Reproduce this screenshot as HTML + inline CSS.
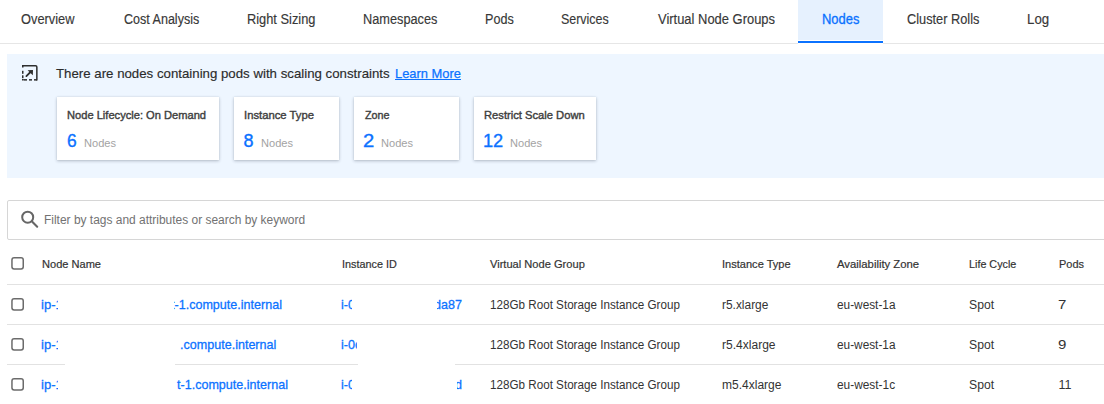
<!DOCTYPE html>
<html><head><meta charset="utf-8"><title>Nodes</title>
<style>
html,body{margin:0;padding:0}
body{width:1104px;height:404px;overflow:hidden;background:#fff;position:relative;font-family:"Liberation Sans",sans-serif}
.abs{position:absolute}
.t{position:absolute;white-space:nowrap;transform-origin:0 0}
.clip{position:absolute;overflow:hidden}
.tabline{position:absolute;left:0;top:43px;width:1104px;height:1px;background:#e6e6e6}
.tabact{position:absolute;left:798px;top:0;width:85px;height:40px;background:#e6f1fe}
.tabbar{position:absolute;left:798px;top:41px;width:85px;height:2px;background:#0b72ff}.tabcov{position:absolute;left:798px;top:43px;width:85px;height:1px;background:#fff}
.panel{position:absolute;left:7px;top:54px;width:1110px;height:124px;background:#eef6ff}
.card{position:absolute;top:97px;height:63px;background:#fff;box-shadow:0 1px 3px rgba(40,50,70,.3),0 0 1px rgba(40,50,70,.12)}
.search{position:absolute;left:7px;top:200px;width:1120px;height:38px;border:1px solid #d6d6d6;border-radius:2px;background:#fff}
.hl{position:absolute;left:7px;width:1100px;height:1px;background:#e2e2e2}
.cb{position:absolute;left:11px;width:10px;height:10px;border:1.5px solid #6a6a6a;border-radius:2px;background:#fff}
.gap{position:absolute;height:3px;background:#fff}
</style></head><body>
<div class="tabact"></div><div class="tabline"></div><div class="tabbar"></div><div class="tabcov"></div>
<div class="panel"></div>
<svg class="abs" style="left:18px;top:61px" width="24" height="24" viewBox="18 61 24 24">
<path d="M22.75 67.6 V65.75 H35.6 Q36.85 65.75 36.85 67 V80.6" fill="none" stroke="#2e2e2e" stroke-width="1.5"/>
<rect x="22" y="70.8" width="1.5" height="3" fill="#2e2e2e"/>
<rect x="22" y="75.3" width="1.5" height="2.9" fill="#2e2e2e"/>
<path d="M22.75 79 V79.85 H23.8" fill="none" stroke="#2e2e2e" stroke-width="1.5"/>
<rect x="24" y="79.1" width="3" height="1.5" fill="#2e2e2e"/>
<rect x="29" y="79.1" width="3" height="1.5" fill="#2e2e2e"/>
<rect x="34" y="79.1" width="3" height="1.5" fill="#2e2e2e"/>
<line x1="26.4" y1="76.1" x2="31" y2="71.5" stroke="#2e2e2e" stroke-width="1.8" stroke-linecap="round"/>
<path d="M27.6 70.2 L33 70 L32.8 75.3 Z" fill="#2e2e2e"/>
</svg>
<div class="card" style="left:57px;width:162px"></div>
<div class="card" style="left:234px;width:105px"></div>
<div class="card" style="left:354px;width:105px"></div>
<div class="card" style="left:474px;width:122px"></div>
<div class="search"></div>
<svg class="abs" style="left:15px;top:205px" width="30" height="30" viewBox="15 205 30 30">
<circle cx="27.7" cy="217.2" r="5.5" fill="none" stroke="#666" stroke-width="2"/>
<line x1="32" y1="221.5" x2="37.2" y2="226.7" stroke="#666" stroke-width="2.1" stroke-linecap="round"/>
</svg>
<div class="hl" style="top:284px"></div>
<div class="hl" style="top:324px"></div>
<div class="hl" style="top:364px"></div>
<div class="gap" style="left:64.7px;width:110.2px;top:363px"></div>
<div class="gap" style="left:358.1px;width:96.5px;top:363px"></div>
<svg class="abs" style="left:8px;top:254.10000000000002px" width="20" height="20" viewBox="8 254.10000000000002 20 20"><rect x="11.95" y="257.85" width="11.3" height="11.3" rx="2.2" fill="#fff" stroke="#6b6b6b" stroke-width="1.5"/></svg><svg class="abs" style="left:8px;top:295px" width="20" height="20" viewBox="8 295 20 20"><rect x="11.95" y="298.75" width="11.3" height="11.3" rx="2.2" fill="#fff" stroke="#6b6b6b" stroke-width="1.5"/></svg><svg class="abs" style="left:8px;top:335px" width="20" height="20" viewBox="8 335 20 20"><rect x="11.95" y="338.75" width="11.3" height="11.3" rx="2.2" fill="#fff" stroke="#6b6b6b" stroke-width="1.5"/></svg><svg class="abs" style="left:8px;top:375px" width="20" height="20" viewBox="8 375 20 20"><rect x="11.95" y="378.75" width="11.3" height="11.3" rx="2.2" fill="#fff" stroke="#6b6b6b" stroke-width="1.5"/></svg>
<span class="t" style="left:21.07px;top:13.2px;font-size:13.8px;line-height:13.8px;color:#383838;transform:scaleX(0.9298);-webkit-text-stroke:0.15px #383838;">Overview</span>
<span class="t" style="left:123.59px;top:13.2px;font-size:13.8px;line-height:13.8px;color:#383838;transform:scaleX(0.9085);-webkit-text-stroke:0.15px #383838;">Cost Analysis</span>
<span class="t" style="left:247.37px;top:13.2px;font-size:13.8px;line-height:13.8px;color:#383838;transform:scaleX(0.9292);-webkit-text-stroke:0.15px #383838;">Right Sizing</span>
<span class="t" style="left:362.78px;top:13.2px;font-size:13.8px;line-height:13.8px;color:#383838;transform:scaleX(0.9241);-webkit-text-stroke:0.15px #383838;">Namespaces</span>
<span class="t" style="left:484.79px;top:13.2px;font-size:13.8px;line-height:13.8px;color:#383838;transform:scaleX(0.9133);-webkit-text-stroke:0.15px #383838;">Pods</span>
<span class="t" style="left:561.4px;top:13.2px;font-size:13.8px;line-height:13.8px;color:#383838;transform:scaleX(0.9019);-webkit-text-stroke:0.15px #383838;">Services</span>
<span class="t" style="left:657.6px;top:13.2px;font-size:13.8px;line-height:13.8px;color:#383838;transform:scaleX(0.9379);-webkit-text-stroke:0.15px #383838;">Virtual Node Groups</span>
<span class="t" style="left:821.66px;top:13.2px;font-size:13.8px;line-height:13.8px;color:#0b72ff;transform:scaleX(0.9385);-webkit-text-stroke:0.3px #0b72ff;">Nodes</span>
<span class="t" style="left:906.57px;top:13.2px;font-size:13.8px;line-height:13.8px;color:#383838;transform:scaleX(0.9260);-webkit-text-stroke:0.15px #383838;">Cluster Rolls</span>
<span class="t" style="left:1026.94px;top:13.2px;font-size:13.8px;line-height:13.8px;color:#383838;transform:scaleX(0.9619);-webkit-text-stroke:0.15px #383838;">Log</span>
<span class="t" style="left:55.7px;top:67px;font-size:13.5px;line-height:13.5px;color:#2b2b2b;transform:scaleX(0.9815);-webkit-text-stroke:0.15px #2b2b2b;">There are nodes containing pods with scaling constraints</span>
<span class="t" style="left:395.14px;top:67px;font-size:13.5px;line-height:13.5px;color:#0b72ff;transform:scaleX(0.9559);-webkit-text-stroke:0.25px #0b72ff;text-decoration:underline;">Learn More</span>
<span class="t" style="left:67.23px;top:109.9px;font-size:11.5px;line-height:11.5px;color:#3e3e3e;transform:scaleX(0.9664);-webkit-text-stroke:0.4px #3e3e3e;">Node Lifecycle: On Demand</span>
<span class="t" style="left:66.93px;top:131.8px;font-size:18px;line-height:18px;color:#0b72ff;transform:scaleX(0.9667);-webkit-text-stroke:0.35px #0b72ff;">6</span>
<span class="t" style="left:84.24px;top:137.8px;font-size:11.5px;line-height:11.5px;color:#a3a3a3;transform:scaleX(0.9625);">Nodes</span>
<span class="t" style="left:243.82px;top:109.9px;font-size:11.5px;line-height:11.5px;color:#3e3e3e;transform:scaleX(0.9800);-webkit-text-stroke:0.4px #3e3e3e;">Instance Type</span>
<span class="t" style="left:243.5px;top:131.8px;font-size:18px;line-height:18px;color:#0b72ff;transform:scaleX(1.0000);-webkit-text-stroke:0.35px #0b72ff;">8</span>
<span class="t" style="left:261.04px;top:137.8px;font-size:11.5px;line-height:11.5px;color:#a3a3a3;transform:scaleX(0.9625);">Nodes</span>
<span class="t" style="left:364.6px;top:109.9px;font-size:11.5px;line-height:11.5px;color:#3e3e3e;transform:scaleX(0.9385);-webkit-text-stroke:0.4px #3e3e3e;">Zone</span>
<span class="t" style="left:363.48px;top:131.8px;font-size:18px;line-height:18px;color:#0b72ff;transform:scaleX(1.1250);-webkit-text-stroke:0.35px #0b72ff;">2</span>
<span class="t" style="left:381.04px;top:137.8px;font-size:11.5px;line-height:11.5px;color:#a3a3a3;transform:scaleX(0.9625);">Nodes</span>
<span class="t" style="left:483.83px;top:109.9px;font-size:11.5px;line-height:11.5px;color:#3e3e3e;transform:scaleX(0.9725);-webkit-text-stroke:0.4px #3e3e3e;">Restrict Scale Down</span>
<span class="t" style="left:483.49px;top:131.8px;font-size:18px;line-height:18px;color:#0b72ff;transform:scaleX(1.0111);-webkit-text-stroke:0.35px #0b72ff;">12</span>
<span class="t" style="left:510.24px;top:137.8px;font-size:11.5px;line-height:11.5px;color:#a3a3a3;transform:scaleX(0.9625);">Nodes</span>
<span class="t" style="left:44.3px;top:213.7px;font-size:12px;line-height:12px;color:#727272;transform:scaleX(0.9962);">Filter by tags and attributes or search by keyword</span>
<span class="t" style="left:41.54px;top:258.8px;font-size:11.5px;line-height:11.5px;color:#333;transform:scaleX(0.9617);-webkit-text-stroke:0.2px #333;">Node Name</span>
<span class="t" style="left:341.76px;top:258.8px;font-size:11.5px;line-height:11.5px;color:#333;transform:scaleX(0.9421);-webkit-text-stroke:0.2px #333;">Instance ID</span>
<span class="t" style="left:490.3px;top:258.8px;font-size:11.5px;line-height:11.5px;color:#333;transform:scaleX(0.9653);-webkit-text-stroke:0.2px #333;">Virtual Node Group</span>
<span class="t" style="left:722.04px;top:258.8px;font-size:11.5px;line-height:11.5px;color:#333;transform:scaleX(0.9614);-webkit-text-stroke:0.2px #333;">Instance Type</span>
<span class="t" style="left:837.2px;top:258.8px;font-size:11.5px;line-height:11.5px;color:#333;transform:scaleX(0.9831);-webkit-text-stroke:0.2px #333;">Availability Zone</span>
<span class="t" style="left:969.06px;top:258.8px;font-size:11.5px;line-height:11.5px;color:#333;transform:scaleX(0.9367);-webkit-text-stroke:0.2px #333;">Life Cycle</span>
<span class="t" style="left:1058.55px;top:258.8px;font-size:11.5px;line-height:11.5px;color:#333;transform:scaleX(0.9520);-webkit-text-stroke:0.2px #333;">Pods</span>
<span class="t" style="left:489.57px;top:298.9px;font-size:12.5px;line-height:12.5px;color:#333;transform:scaleX(0.9327);">128Gb Root Storage Instance Group</span>
<span class="t" style="left:722.05px;top:298.9px;font-size:12.5px;line-height:12.5px;color:#333;transform:scaleX(0.9532);">r5.xlarge</span>
<span class="t" style="left:836.95px;top:298.9px;font-size:12.5px;line-height:12.5px;color:#333;transform:scaleX(0.9459);">eu-west-1a</span>
<span class="t" style="left:969.02px;top:298.9px;font-size:12.5px;line-height:12.5px;color:#333;transform:scaleX(0.9760);">Spot</span>
<span class="t" style="left:1058.3px;top:298.9px;font-size:12.5px;line-height:12.5px;color:#333;transform:scaleX(1.2000);">7</span>
<span class="t" style="left:489.57px;top:338.9px;font-size:12.5px;line-height:12.5px;color:#333;transform:scaleX(0.9327);">128Gb Root Storage Instance Group</span>
<span class="t" style="left:722.04px;top:338.9px;font-size:12.5px;line-height:12.5px;color:#333;transform:scaleX(0.9630);">r5.4xlarge</span>
<span class="t" style="left:836.95px;top:338.9px;font-size:12.5px;line-height:12.5px;color:#333;transform:scaleX(0.9459);">eu-west-1a</span>
<span class="t" style="left:969.02px;top:338.9px;font-size:12.5px;line-height:12.5px;color:#333;transform:scaleX(0.9760);">Spot</span>
<span class="t" style="left:1058.3px;top:338.9px;font-size:12.5px;line-height:12.5px;color:#333;transform:scaleX(1.2000);">9</span>
<span class="t" style="left:489.57px;top:378.9px;font-size:12.5px;line-height:12.5px;color:#333;transform:scaleX(0.9327);">128Gb Root Storage Instance Group</span>
<span class="t" style="left:722.04px;top:378.9px;font-size:12.5px;line-height:12.5px;color:#333;transform:scaleX(0.9617);">m5.4xlarge</span>
<span class="t" style="left:836.95px;top:378.9px;font-size:12.5px;line-height:12.5px;color:#333;transform:scaleX(0.9500);">eu-west-1c</span>
<span class="t" style="left:969.02px;top:378.9px;font-size:12.5px;line-height:12.5px;color:#333;transform:scaleX(0.9760);">Spot</span>
<span class="t" style="left:1058.5px;top:378.9px;font-size:12.5px;line-height:12.5px;color:#333;transform:scaleX(1.0000);">11</span>
<div class="clip" style="left:0px;width:58px;top:293px;height:22px"><span class="t" style="left:41.43px;top:298px;font-size:13.5px;line-height:13.5px;color:#0b72ff;transform:scaleX(0.9700);-webkit-text-stroke:0.3px #0b72ff;left:41.43px;top:5px">ip-10</span></div>
<div class="clip" style="left:0px;width:58px;top:333px;height:22px"><span class="t" style="left:41.43px;top:338px;font-size:13.5px;line-height:13.5px;color:#0b72ff;transform:scaleX(0.9700);-webkit-text-stroke:0.3px #0b72ff;left:41.43px;top:5px">ip-10</span></div>
<div class="clip" style="left:0px;width:58px;top:373px;height:22px"><span class="t" style="left:41.43px;top:378px;font-size:13.5px;line-height:13.5px;color:#0b72ff;transform:scaleX(0.9700);-webkit-text-stroke:0.3px #0b72ff;left:41.43px;top:5px">ip-10</span></div>
<div class="clip" style="left:173.8px;width:226.2px;top:293px;height:22px"><span class="t" style="left:171.03px;top:298px;font-size:13.5px;line-height:13.5px;color:#0b72ff;transform:scaleX(0.9300);-webkit-text-stroke:0.3px #0b72ff;left:-2.77px;top:5px">t-1.compute.internal</span></div>
<div class="clip" style="left:174.5px;width:225.5px;top:333px;height:22px"><span class="t" style="left:179.91px;top:338px;font-size:13.5px;line-height:13.5px;color:#0b72ff;transform:scaleX(0.9300);-webkit-text-stroke:0.3px #0b72ff;left:5.41px;top:5px">.compute.internal</span></div>
<div class="clip" style="left:174.8px;width:225.2px;top:373px;height:22px"><span class="t" style="left:176.53px;top:378px;font-size:13.5px;line-height:13.5px;color:#0b72ff;transform:scaleX(0.9300);-webkit-text-stroke:0.3px #0b72ff;left:1.73px;top:5px">t-1.compute.internal</span></div>
<div class="clip" style="left:300px;width:51.9px;top:293px;height:22px"><span class="t" style="left:341.27px;top:298px;font-size:13.5px;line-height:13.5px;color:#0b72ff;transform:scaleX(0.9300);-webkit-text-stroke:0.3px #0b72ff;left:41.27px;top:5px">i-0a</span></div>
<div class="clip" style="left:300px;width:56.8px;top:333px;height:22px"><span class="t" style="left:341.27px;top:338px;font-size:13.5px;line-height:13.5px;color:#0b72ff;transform:scaleX(0.9300);-webkit-text-stroke:0.3px #0b72ff;left:41.27px;top:5px">i-0c</span></div>
<div class="clip" style="left:300px;width:51.9px;top:373px;height:22px"><span class="t" style="left:341.27px;top:378px;font-size:13.5px;line-height:13.5px;color:#0b72ff;transform:scaleX(0.9300);-webkit-text-stroke:0.3px #0b72ff;left:41.27px;top:5px">i-0a</span></div>
<div class="clip" style="left:436.5px;width:43.5px;top:293px;height:22px"><span class="t" style="left:426.49px;top:298px;font-size:13.5px;line-height:13.5px;color:#0b72ff;transform:scaleX(0.9300);-webkit-text-stroke:0.3px #0b72ff;left:-10.01px;top:5px">5da87</span></div>
<div class="clip" style="left:456.5px;width:23.5px;top:373px;height:22px"><span class="t" style="left:447.88px;top:378px;font-size:13.5px;line-height:13.5px;color:#0b72ff;transform:scaleX(0.9300);-webkit-text-stroke:0.3px #0b72ff;left:-8.62px;top:5px">3d</span></div>
</body></html>
